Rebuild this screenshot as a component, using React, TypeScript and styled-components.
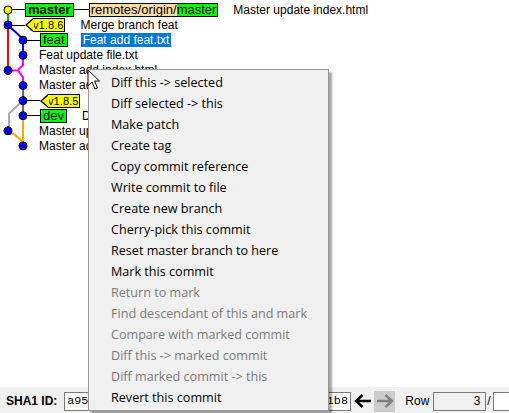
import styled, { createGlobalStyle } from "styled-components";

const GlobalStyle = createGlobalStyle`
    html, body {
        margin: 0;
        padding: 0;
        overflow: hidden;
        background: #fff;
    }
`

const Window = styled.div`
    display: flex;
    flex-direction: column;
    width: 100vw;
    height: 100vh;
    font-family: "Liberation Sans", Arial, sans-serif;
    color: #000;
`

const GraphPane = styled.div`
    position: relative;
    flex: 1;
    background: #fff;
    overflow: hidden;
`

const GraphCanvas = styled.svg`
    position: absolute;
    top: 0;
    left: 0;
    z-index: 1;
    pointer-events: none;
`

const RowList = styled.div`
    display: flex;
    flex-direction: column;
    padding-top: 2.45px;
`

const Row = styled.div<{ $indent: number }>`
    display: flex;
    align-items: center;
    height: 15.1px;
    padding-left: ${p => p.$indent}px;
    font-size: 12px;
    white-space: nowrap;
`

const Link = styled.span<{ $w: number }>`
    width: ${p => p.$w}px;
    height: 0;
    border-top: 1px solid #000;
`

const BranchTag = styled.span<{ $bold?: boolean }>`
    display: flex;
    align-items: center;
    height: 14px;
    box-sizing: border-box;
    padding: 0 2px;
    border: 1px solid #000;
    background: #00ff00;
    font-size: 13px;
    font-weight: ${p => (p.$bold ? "bold" : "normal")};
    line-height: 12px;
`

const RemoteTag = styled(BranchTag)`
    padding: 0 1px 0 0;
    background: #00ff00;
`

const RemotePrefix = styled.span`
    display: flex;
    align-items: center;
    align-self: stretch;
    padding-left: 1px;
    background: #ffddaa;
`

const VersionTag = styled.span`
    position: relative;
    display: flex;
    align-items: center;
    height: 14px;
    box-sizing: border-box;
    margin-left: 8px;
    padding: 0 1px 0 0;
    border: 1px solid #000;
    border-left: none;
    background: #ffff00;
    font-size: 11.2px;
    line-height: 12px;

    &::before {
        content: "";
        position: absolute;
        left: -8px;
        top: -1px;
        border-top: 7px solid transparent;
        border-bottom: 7px solid transparent;
        border-right: 8px solid #000;
    }

    &::after {
        content: "";
        position: absolute;
        left: -6.5px;
        top: 0;
        border-top: 6px solid transparent;
        border-bottom: 6px solid transparent;
        border-right: 7px solid #ffff00;
    }
`

const CommitText = styled.span<{ $gap: number; $selected?: boolean }>`
    margin-left: ${p => p.$gap}px;
    padding: ${p => (p.$selected ? "0 2px" : "0")};
    line-height: 14px;
    background: ${p => (p.$selected ? "#0078d7" : "transparent")};
    color: ${p => (p.$selected ? "#fff" : "#000")};
`

const Menu = styled.div`
    position: absolute;
    left: 88px;
    top: 69px;
    z-index: 2;
    width: 241px;
    box-sizing: border-box;
    padding: 2px 0;
    border: 1px solid #979797;
    background: #f0f0f0;
    box-shadow: 3px 3px 2px rgba(0, 0, 0, 0.35);
    font-family: "Open Sans", "Noto Sans CJK SC", sans-serif;
    font-size: 12.6px;
`

const MenuItem = styled.div<{ $disabled?: boolean }>`
    height: 21px;
    line-height: 21px;
    padding-left: 22px;
    color: ${p => (p.$disabled ? "#7a7a7a" : "#000")};
    white-space: nowrap;
`

const Cursor = styled.svg`
    position: absolute;
    left: 87px;
    top: 69px;
    z-index: 3;
`

const BottomBar = styled.div`
    display: flex;
    align-items: center;
    flex-shrink: 0;
    height: 26px;
    padding: 2px 0 0 6px;
    box-sizing: border-box;
    background: #f0f0f0;
    font-size: 12px;
    white-space: nowrap;
    overflow: hidden;

    & > * {
        flex-shrink: 0;
    }
`

const BarLabel = styled.span<{ $bold?: boolean }>`
    font-weight: ${p => (p.$bold ? "bold" : "normal")};
    margin-right: 7px;
`

const RowLabel = styled.span`
    margin: 0 4px 0 10px;
`

const ShaField = styled.div`
    display: flex;
    align-items: center;
    width: 287px;
    height: 19px;
    box-sizing: border-box;
    padding-left: 2px;
    border: 1px solid #7a7a7a;
    background: #fff;
    font-family: "Liberation Mono", "Courier New", monospace;
    font-size: 11.7px;
    overflow: hidden;
`

const NavButton = styled.div<{ $disabled?: boolean }>`
    display: flex;
    align-items: center;
    justify-content: center;
    width: 21px;
    height: 21px;
    margin-left: 1px;
    background: ${p => (p.$disabled ? "#cccccc" : "transparent")};
`

const RowField = styled.div<{ $w: number; $bg: string }>`
    display: flex;
    align-items: center;
    justify-content: flex-end;
    width: ${p => p.$w}px;
    height: 19px;
    box-sizing: border-box;
    padding-right: 5px;
    border: 1px solid #7a7a7a;
    background: ${p => p.$bg};
`

const Slash = styled.span`
    margin: 0 2px 0 1px;
`

type Tag =
    | { kind: "branch"; label: string; bold?: boolean }
    | { kind: "remote"; prefix: string; label: string }
    | { kind: "version"; label: string };

interface Commit {
    indent: number;
    tags?: Tag[];
    text: string;
    selected?: boolean;
}

const commits: Commit[] = [
    {
        indent: 8,
        tags: [
            { kind: "branch", label: "master", bold: true },
            { kind: "remote", prefix: "remotes/origin/", label: "master" },
        ],
        text: "Master update index.html",
    },
    { indent: 8, tags: [{ kind: "version", label: "v1.8.6" }], text: "Merge branch feat" },
    { indent: 23, tags: [{ kind: "branch", label: "feat" }], text: "Feat add feat.txt", selected: true },
    { indent: 39, text: "Feat update file.txt" },
    { indent: 39, text: "Master add index.html" },
    { indent: 39, text: "Master add style.css" },
    { indent: 23, tags: [{ kind: "version", label: "v1.8.5" }], text: "Release v1.8.5" },
    { indent: 23, tags: [{ kind: "branch", label: "dev" }], text: "Dev update readme" },
    { indent: 39, text: "Master update README.md" },
    { indent: 39, text: "Master add README.md" },
];

const menuItems = [
    { label: "Diff this -> selected" },
    { label: "Diff selected -> this" },
    { label: "Make patch" },
    { label: "Create tag" },
    { label: "Copy commit reference" },
    { label: "Write commit to file" },
    { label: "Create new branch" },
    { label: "Cherry-pick this commit" },
    { label: "Reset master branch to here" },
    { label: "Mark this commit" },
    { label: "Return to mark", disabled: true },
    { label: "Find descendant of this and mark", disabled: true },
    { label: "Compare with marked commit", disabled: true },
    { label: "Diff this -> marked commit", disabled: true },
    { label: "Diff marked commit -> this", disabled: true },
    { label: "Revert this commit" },
];

// commit dots: [x, row]
const dots: [number, number][] = [
    [8, 0], [8, 1], [23, 2], [23, 3], [8, 4],
    [23, 5], [23, 6], [23, 7], [8, 8], [23, 9],
];

const y = (row: number) => 10 + 15.1 * row;

function Graph() {
    return (
        <GraphCanvas width={40} height={160}>
            <g fill="none" strokeWidth={2} strokeLinejoin="round">
                <path d={`M8 ${y(0)} V${y(1)}`} stroke="#00c000" />
                <path d={`M8 ${y(1)} V${y(4)}`} stroke="#ff0000" />
                <path d={`M8 ${y(1)} L20 ${y(2) - 4} L23 ${y(2)} V${y(3)}`} stroke="#0000ff" />
                <path d={`M23 ${y(3)} V${y(3) + 10} L18 ${y(4) - 1}`} stroke="#ff00ff" />
                <path d={`M8 ${y(4)} H18 L23 ${y(4) + 7} V${y(5)}`} stroke="#ff00ff" />
                <path d={`M23 ${y(5)} V${y(6)}`} stroke="#333333" strokeWidth={1.5} />
                <path d={`M23 ${y(6)} V${y(7)}`} stroke="#7a1f1f" strokeWidth={1.5} />
                <path d={`M23 ${y(6)} L9 ${y(6) + 13} V${y(8) - 4} L8 ${y(8)}`} stroke="#aaaaaa" />
                <path d={`M23 ${y(7)} V${y(9)}`} stroke="#ffa500" />
                <path d={`M8 ${y(8)} L15 ${y(8) + 4} L23 ${y(9) - 4}`} stroke="#ffa500" />
            </g>
            {dots.map(([cx, row], i) => (
                <circle
                    key={i}
                    cx={cx}
                    cy={y(row)}
                    r={4}
                    fill={i === 0 ? "#ffff00" : "#0000ff"}
                    stroke="#000"
                    strokeWidth={1}
                />
            ))}
        </GraphCanvas>
    );
}

function CommitRow({ commit }: { commit: Commit }) {
    const tags = commit.tags || [];
    return (
        <Row $indent={commit.indent}>
            {tags.map((tag, i) => (
                <>
                    <Link key={"l" + i} $w={i === 0 ? 17 : 15} />
                    {tag.kind === "branch" && <BranchTag $bold={tag.bold}>{tag.label}</BranchTag>}
                    {tag.kind === "remote" && (
                        <RemoteTag>
                            <RemotePrefix>{tag.prefix}</RemotePrefix>
                            {tag.label}
                        </RemoteTag>
                    )}
                    {tag.kind === "version" && <VersionTag>{tag.label}</VersionTag>}
                </>
            ))}
            <CommitText $gap={tags.length ? (commit.selected ? 13 : 15) : 0} $selected={commit.selected}>
                {commit.text}
            </CommitText>
        </Row>
    );
}

function ArrowIcon({ dir, color }: { dir: "left" | "right"; color: string }) {
    return (
        <svg width={18} height={14} viewBox="0 0 18 14" style={{ transform: dir === "right" ? "scaleX(-1)" : undefined }}>
            <path d="M2 7 H17 M8.5 1 L2 7 L8.5 13" fill="none" stroke={color} strokeWidth={2.4} strokeLinecap="butt" />
        </svg>
    );
}

export default function App() {
    return (
        <Window>
            <GlobalStyle />
            <GraphPane>
                <Graph />
                <RowList>
                    {commits.map((c, i) => (
                        <CommitRow key={i} commit={c} />
                    ))}
                </RowList>
            </GraphPane>
            <BottomBar>
                <BarLabel $bold>SHA1 ID:</BarLabel>
                <ShaField>a95c3e7f0d2b84a6e91c57f3d08b6a2e4c9f71b8</ShaField>
                <NavButton>
                    <ArrowIcon dir="left" color="#000" />
                </NavButton>
                <NavButton $disabled>
                    <ArrowIcon dir="right" color="#7f7f7f" />
                </NavButton>
                <RowLabel>Row</RowLabel>
                <RowField $w={53} $bg="#f0f0f0">3</RowField>
                <Slash>/</Slash>
                <RowField $w={40} $bg="#fff" />
            </BottomBar>
            <Menu>
                {menuItems.map(item => (
                    <MenuItem key={item.label} $disabled={item.disabled}>
                        {item.label}
                    </MenuItem>
                ))}
            </Menu>
            <Cursor width={14} height={22} viewBox="0 0 14 22">
                <path d="M1 1 V17 L5 13 L8 20 L10.5 19 L7.5 12 H12.5 Z" fill="#fff" stroke="#000" strokeWidth={1} strokeLinejoin="miter" />
            </Cursor>
        </Window>
    );
}
